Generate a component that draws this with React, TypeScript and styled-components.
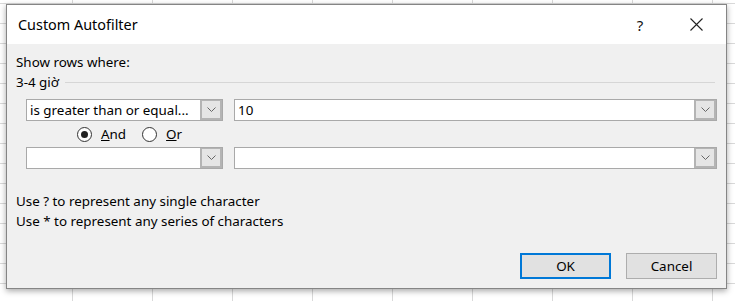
import React from "react";
import styled, { createGlobalStyle } from "styled-components";

const Global = createGlobalStyle`
  html, body { margin: 0; padding: 0; }
  body {
    width: 735px; height: 301px; overflow: hidden;
    font-family: "Noto Sans", "Open Sans", sans-serif;
    background: #ffffff;
  }
`;

const Sheet = styled.div`
  width: 735px;
  height: 301px;
  padding: 4px 0 0 6px;
  box-sizing: border-box;
  background-color: #ffffff;
  background-image:
    linear-gradient(to right, #d9d9d9 1px, transparent 1px),
    linear-gradient(to bottom, #d9d9d9 1px, transparent 1px);
  background-size: 80px 20px, 80px 20px;
  background-position: -8px 0, 0 3px;
  overflow: hidden;
`;

const Dialog = styled.div`
  width: 721px;
  height: 285px;
  box-sizing: border-box;
  border: 1px solid #858585;
  background: #f0f0f0;
  box-shadow: 0 2px 6px rgba(0, 0, 0, 0.35);
  display: flex;
  flex-direction: column;
`;

const TitleBar = styled.div`
  height: 39px;
  background: #ffffff;
  display: flex;
  align-items: center;
  padding: 0 2px 0 11px;
  flex-shrink: 0;
`;

const Title = styled.div`
  flex: 1;
  font-size: 14.4px;
  color: #000;
`;

const TitleButton = styled.div`
  width: 56px;
  height: 39px;
  display: flex;
  align-items: center;
  justify-content: center;
  font-size: 15px;
  color: #111;
`;

const Body = styled.div`
  flex: 1;
  display: flex;
  flex-direction: column;
  padding: 9px 9px 0 9px;
  font-size: 13.4px;
  color: #000;
`;

const Label = styled.div`
  height: 19px;
  line-height: 19px;
`;

const GroupRow = styled.div`
  display: flex;
  align-items: center;
  height: 20px;
  gap: 6px;
`;

const Rule = styled.div`
  flex: 1;
  height: 1px;
  background: #d6d6d6;
  margin-right: 2px;
`;

const CondRow = styled.div<{ $top: number }>`
  display: flex;
  gap: 11px;
  padding-left: 10px;
  margin-top: ${(p) => p.$top}px;
`;

const Combo = styled.div<{ $w?: number }>`
  height: 22px;
  box-sizing: border-box;
  border: 1px solid #a9a9a9;
  background: #ffffff;
  display: flex;
  align-items: stretch;
  ${(p) => (p.$w ? `width: ${p.$w}px;` : "flex: 1;")}
`;

const ComboText = styled.div`
  flex: 1;
  padding-left: 3px;
  line-height: 20px;
  font-size: 13.4px;
  white-space: nowrap;
  overflow: hidden;
`;

const DropButton = styled.div`
  width: 22px;
  box-sizing: border-box;
  border: 2px solid #b4b4b4;
  border-top-width: 1px;
  background: #e5e5e5;
  display: flex;
  align-items: center;
  justify-content: center;
`;

const RadioRow = styled.div`
  display: flex;
  align-items: center;
  height: 26px;
  padding-left: 61px;
`;

const RadioItem = styled.label`
  display: flex;
  align-items: center;
  gap: 9px;
  margin-right: 16px;
`;

const RadioCircle = styled.span<{ $on?: boolean }>`
  width: 15px;
  height: 15px;
  box-sizing: border-box;
  border: 1px solid #333;
  border-radius: 50%;
  background: #fff;
  display: flex;
  align-items: center;
  justify-content: center;
  &::after {
    content: "";
    width: 7px;
    height: 7px;
    border-radius: 50%;
    background: ${(p) => (p.$on ? "#222" : "transparent")};
  }
`;

const U = styled.span`
  text-decoration: underline;
`;

const Hints = styled.div`
  margin-top: 22px;
  display: flex;
  flex-direction: column;
`;

const Hint = styled.div`
  height: 20px;
  line-height: 20px;
`;

const Footer = styled.div`
  margin-top: auto;
  display: flex;
  justify-content: flex-end;
  gap: 15px;
  padding: 0 9px 9px 0;
`;

const Button = styled.div<{ $primary?: boolean }>`
  width: 91px;
  height: 26px;
  box-sizing: border-box;
  border: ${(p) => (p.$primary ? "2px solid #0078d7" : "1px solid #adadad")};
  background: #e1e1e1;
  display: flex;
  align-items: center;
  justify-content: center;
  font-size: 13.4px;
`;

const Chevron = () => (
  <svg width="9" height="5" viewBox="0 0 9 5">
    <path d="M0.5 0.5 L4.5 4.5 L8.5 0.5" fill="none" stroke="#666" strokeWidth="1" />
  </svg>
);

const CloseIcon = () => (
  <svg width="13" height="13" viewBox="0 0 13 13">
    <path d="M0.5 0.5 L12.5 12.5 M12.5 0.5 L0.5 12.5" stroke="#222" strokeWidth="1.1" />
  </svg>
);

export default function App() {
  return (
    <>
      <Global />
      <Sheet>
        <Dialog>
          <TitleBar>
            <Title>Custom Autofilter</Title>
            <TitleButton>?</TitleButton>
            <TitleButton>
              <CloseIcon />
            </TitleButton>
          </TitleBar>
          <Body>
            <Label>Show rows where:</Label>
            <GroupRow>
              <span>3-4 giờ</span>
              <Rule />
            </GroupRow>
            <CondRow $top={7}>
              <Combo $w={197}>
                <ComboText>is greater than or equal...</ComboText>
                <DropButton>
                  <Chevron />
                </DropButton>
              </Combo>
              <Combo>
                <ComboText>10</ComboText>
                <DropButton>
                  <Chevron />
                </DropButton>
              </Combo>
            </CondRow>
            <RadioRow>
              <RadioItem>
                <RadioCircle $on />
                <span>
                  <U>A</U>nd
                </span>
              </RadioItem>
              <RadioItem>
                <RadioCircle />
                <span>
                  <U>O</U>r
                </span>
              </RadioItem>
            </RadioRow>
            <CondRow $top={0}>
              <Combo $w={197}>
                <ComboText />
                <DropButton>
                  <Chevron />
                </DropButton>
              </Combo>
              <Combo>
                <ComboText />
                <DropButton>
                  <Chevron />
                </DropButton>
              </Combo>
            </CondRow>
            <Hints>
              <Hint>Use ? to represent any single character</Hint>
              <Hint>Use * to represent any series of characters</Hint>
            </Hints>
          </Body>
          <Footer>
            <Button $primary>OK</Button>
            <Button>Cancel</Button>
          </Footer>
        </Dialog>
      </Sheet>
    </>
  );
}
